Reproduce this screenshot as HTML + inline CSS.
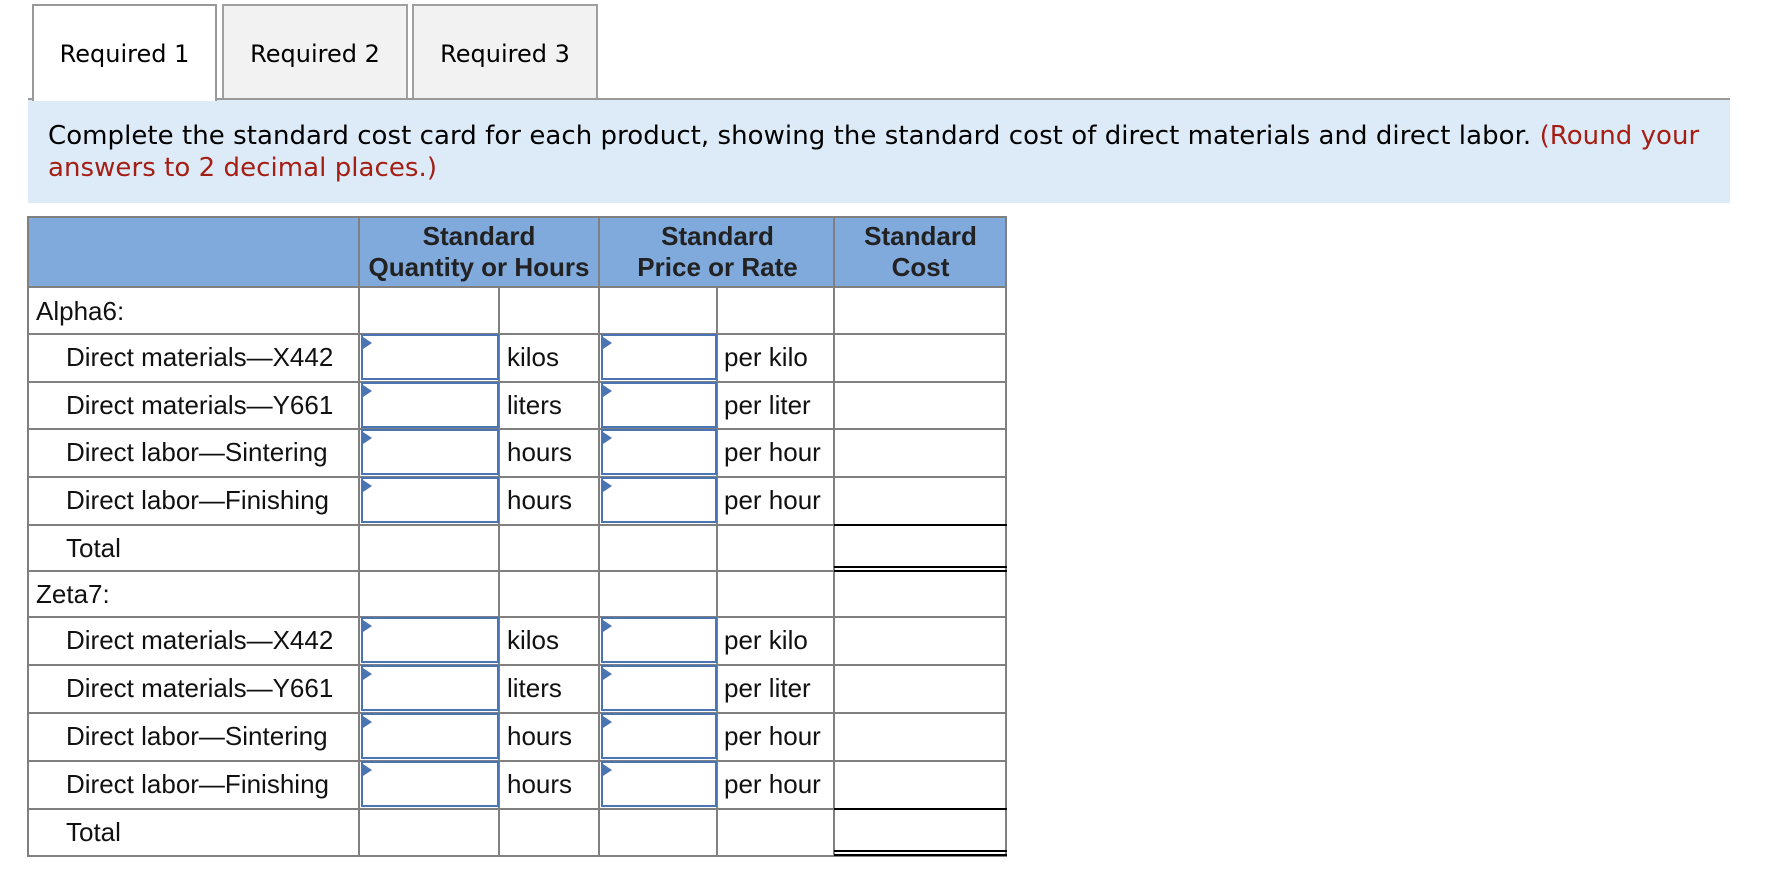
<!DOCTYPE html>
<html><head><meta charset="utf-8"><style>
*{margin:0;padding:0;box-sizing:border-box}
body{width:1788px;height:872px;background:#fff;position:relative;overflow:hidden;font-family:"DejaVu Sans","Liberation Sans",sans-serif}
.a{position:absolute}
.tab{position:absolute;top:4px;height:96px;border:2px solid #a0a0a0;border-bottom:none;background:#f2f2f2;font-size:24px;color:#000;text-align:center;line-height:96px}
.tab.on{background:#fff;border-color:#999;height:97px;z-index:2}
.h{position:absolute;left:28px;width:979px;height:2px;background:#808080}
.v{position:absolute;width:2px;background:#808080}
.t{position:absolute;font-family:"Liberation Sans",Arial,sans-serif;font-size:26px;color:#111;line-height:26px;white-space:nowrap;margin-top:-1px}
.hd{position:absolute;font-family:"Liberation Sans",Arial,sans-serif;font-weight:bold;font-size:26px;color:#222;line-height:31px;text-align:center;top:221px}
.in{position:absolute;border:2px solid #4a74b4;background:#fff}
.in:before{content:"";position:absolute;left:0;top:1px;border-left:9px solid #4a74b4;border-top:6px solid transparent;border-bottom:6px solid transparent}
.k{position:absolute;left:834px;width:173px;height:3px;background:#000}
</style></head><body>
<div class="tab on" style="left:32px;width:185px">Required 1</div>
<div class="tab" style="left:222px;width:186px">Required 2</div>
<div class="tab" style="left:412px;width:186px">Required 3</div>
<div class="a" style="left:28px;top:98px;width:1702px;height:2px;background:#999"></div>
<div class="a" style="left:28px;top:100px;width:1702px;height:103px;background:#ddebf8"></div>
<div class="a" style="left:48px;top:120px;font-size:26px;line-height:32px;color:#000;white-space:nowrap;letter-spacing:0.05px">Complete the standard cost card for each product, showing the standard cost of direct materials and direct labor. <span style="color:#a51e13">(Round your</span><br><span style="color:#a51e13">answers to 2 decimal places.)</span></div>

<div class="a" style="left:28px;top:217px;width:979px;height:70px;background:#80a9dc"></div>
<div class="hd" style="left:359px;width:240px">Standard<br>Quantity or Hours</div>
<div class="hd" style="left:599px;width:237px">Standard<br>Price or Rate</div>
<div class="hd" style="left:834px;width:173px">Standard<br>Cost</div>

<div class="h" style="top:216px"></div>
<div class="h" style="top:286px"></div>
<div class="h" style="top:333px"></div>
<div class="h" style="top:381px"></div>
<div class="h" style="top:428px"></div>
<div class="h" style="top:476px"></div>
<div class="h" style="top:524px"></div>
<div class="h" style="top:570px"></div>
<div class="h" style="top:616px"></div>
<div class="h" style="top:664px"></div>
<div class="h" style="top:712px"></div>
<div class="h" style="top:760px"></div>
<div class="h" style="top:808px"></div>
<div class="h" style="top:855px"></div>
<div class="v" style="left:27px;top:216px;height:641px"></div>
<div class="v" style="left:358px;top:216px;height:641px"></div>
<div class="v" style="left:598px;top:216px;height:641px"></div>
<div class="v" style="left:833px;top:216px;height:641px"></div>
<div class="v" style="left:1005px;top:216px;height:641px"></div>
<div class="v" style="left:498px;top:286px;height:571px"></div>
<div class="v" style="left:716px;top:286px;height:571px"></div>

<div class="k" style="top:524px;height:2px"></div>
<div class="k" style="top:566px;height:2px"></div>
<div class="k" style="top:570px;height:2px"></div>
<div class="k" style="top:808px;height:2px"></div>
<div class="k" style="top:850px;height:2px"></div>
<div class="k" style="top:854px;height:2px"></div>

<div class="t" style="left:36px;top:299px">Alpha6:</div>
<div class="t" style="left:66px;top:345px">Direct materials—X442</div>
<div class="t" style="left:66px;top:393px">Direct materials—Y661</div>
<div class="t" style="left:66px;top:440px">Direct labor—Sintering</div>
<div class="t" style="left:66px;top:488px">Direct labor—Finishing</div>
<div class="t" style="left:66px;top:536px">Total</div>
<div class="t" style="left:36px;top:582px">Zeta7:</div>
<div class="t" style="left:66px;top:628px">Direct materials—X442</div>
<div class="t" style="left:66px;top:676px">Direct materials—Y661</div>
<div class="t" style="left:66px;top:724px">Direct labor—Sintering</div>
<div class="t" style="left:66px;top:772px">Direct labor—Finishing</div>
<div class="t" style="left:66px;top:820px">Total</div>

<div class="t" style="left:507px;top:345px">kilos</div><div class="t" style="left:724px;top:345px">per kilo</div>
<div class="t" style="left:507px;top:393px">liters</div><div class="t" style="left:724px;top:393px">per liter</div>
<div class="t" style="left:507px;top:440px">hours</div><div class="t" style="left:724px;top:440px">per hour</div>
<div class="t" style="left:507px;top:488px">hours</div><div class="t" style="left:724px;top:488px">per hour</div>
<div class="t" style="left:507px;top:628px">kilos</div><div class="t" style="left:724px;top:628px">per kilo</div>
<div class="t" style="left:507px;top:676px">liters</div><div class="t" style="left:724px;top:676px">per liter</div>
<div class="t" style="left:507px;top:724px">hours</div><div class="t" style="left:724px;top:724px">per hour</div>
<div class="t" style="left:507px;top:772px">hours</div><div class="t" style="left:724px;top:772px">per hour</div>

<div class="in" style="left:361px;top:334px;width:138px;height:46px"></div><div class="in" style="left:601px;top:334px;width:116px;height:46px"></div>
<div class="in" style="left:361px;top:382px;width:138px;height:46px"></div><div class="in" style="left:601px;top:382px;width:116px;height:46px"></div>
<div class="in" style="left:361px;top:429px;width:138px;height:46px"></div><div class="in" style="left:601px;top:429px;width:116px;height:46px"></div>
<div class="in" style="left:361px;top:477px;width:138px;height:46px"></div><div class="in" style="left:601px;top:477px;width:116px;height:46px"></div>
<div class="in" style="left:361px;top:617px;width:138px;height:46px"></div><div class="in" style="left:601px;top:617px;width:116px;height:46px"></div>
<div class="in" style="left:361px;top:665px;width:138px;height:46px"></div><div class="in" style="left:601px;top:665px;width:116px;height:46px"></div>
<div class="in" style="left:361px;top:713px;width:138px;height:46px"></div><div class="in" style="left:601px;top:713px;width:116px;height:46px"></div>
<div class="in" style="left:361px;top:761px;width:138px;height:46px"></div><div class="in" style="left:601px;top:761px;width:116px;height:46px"></div>
</body></html>
